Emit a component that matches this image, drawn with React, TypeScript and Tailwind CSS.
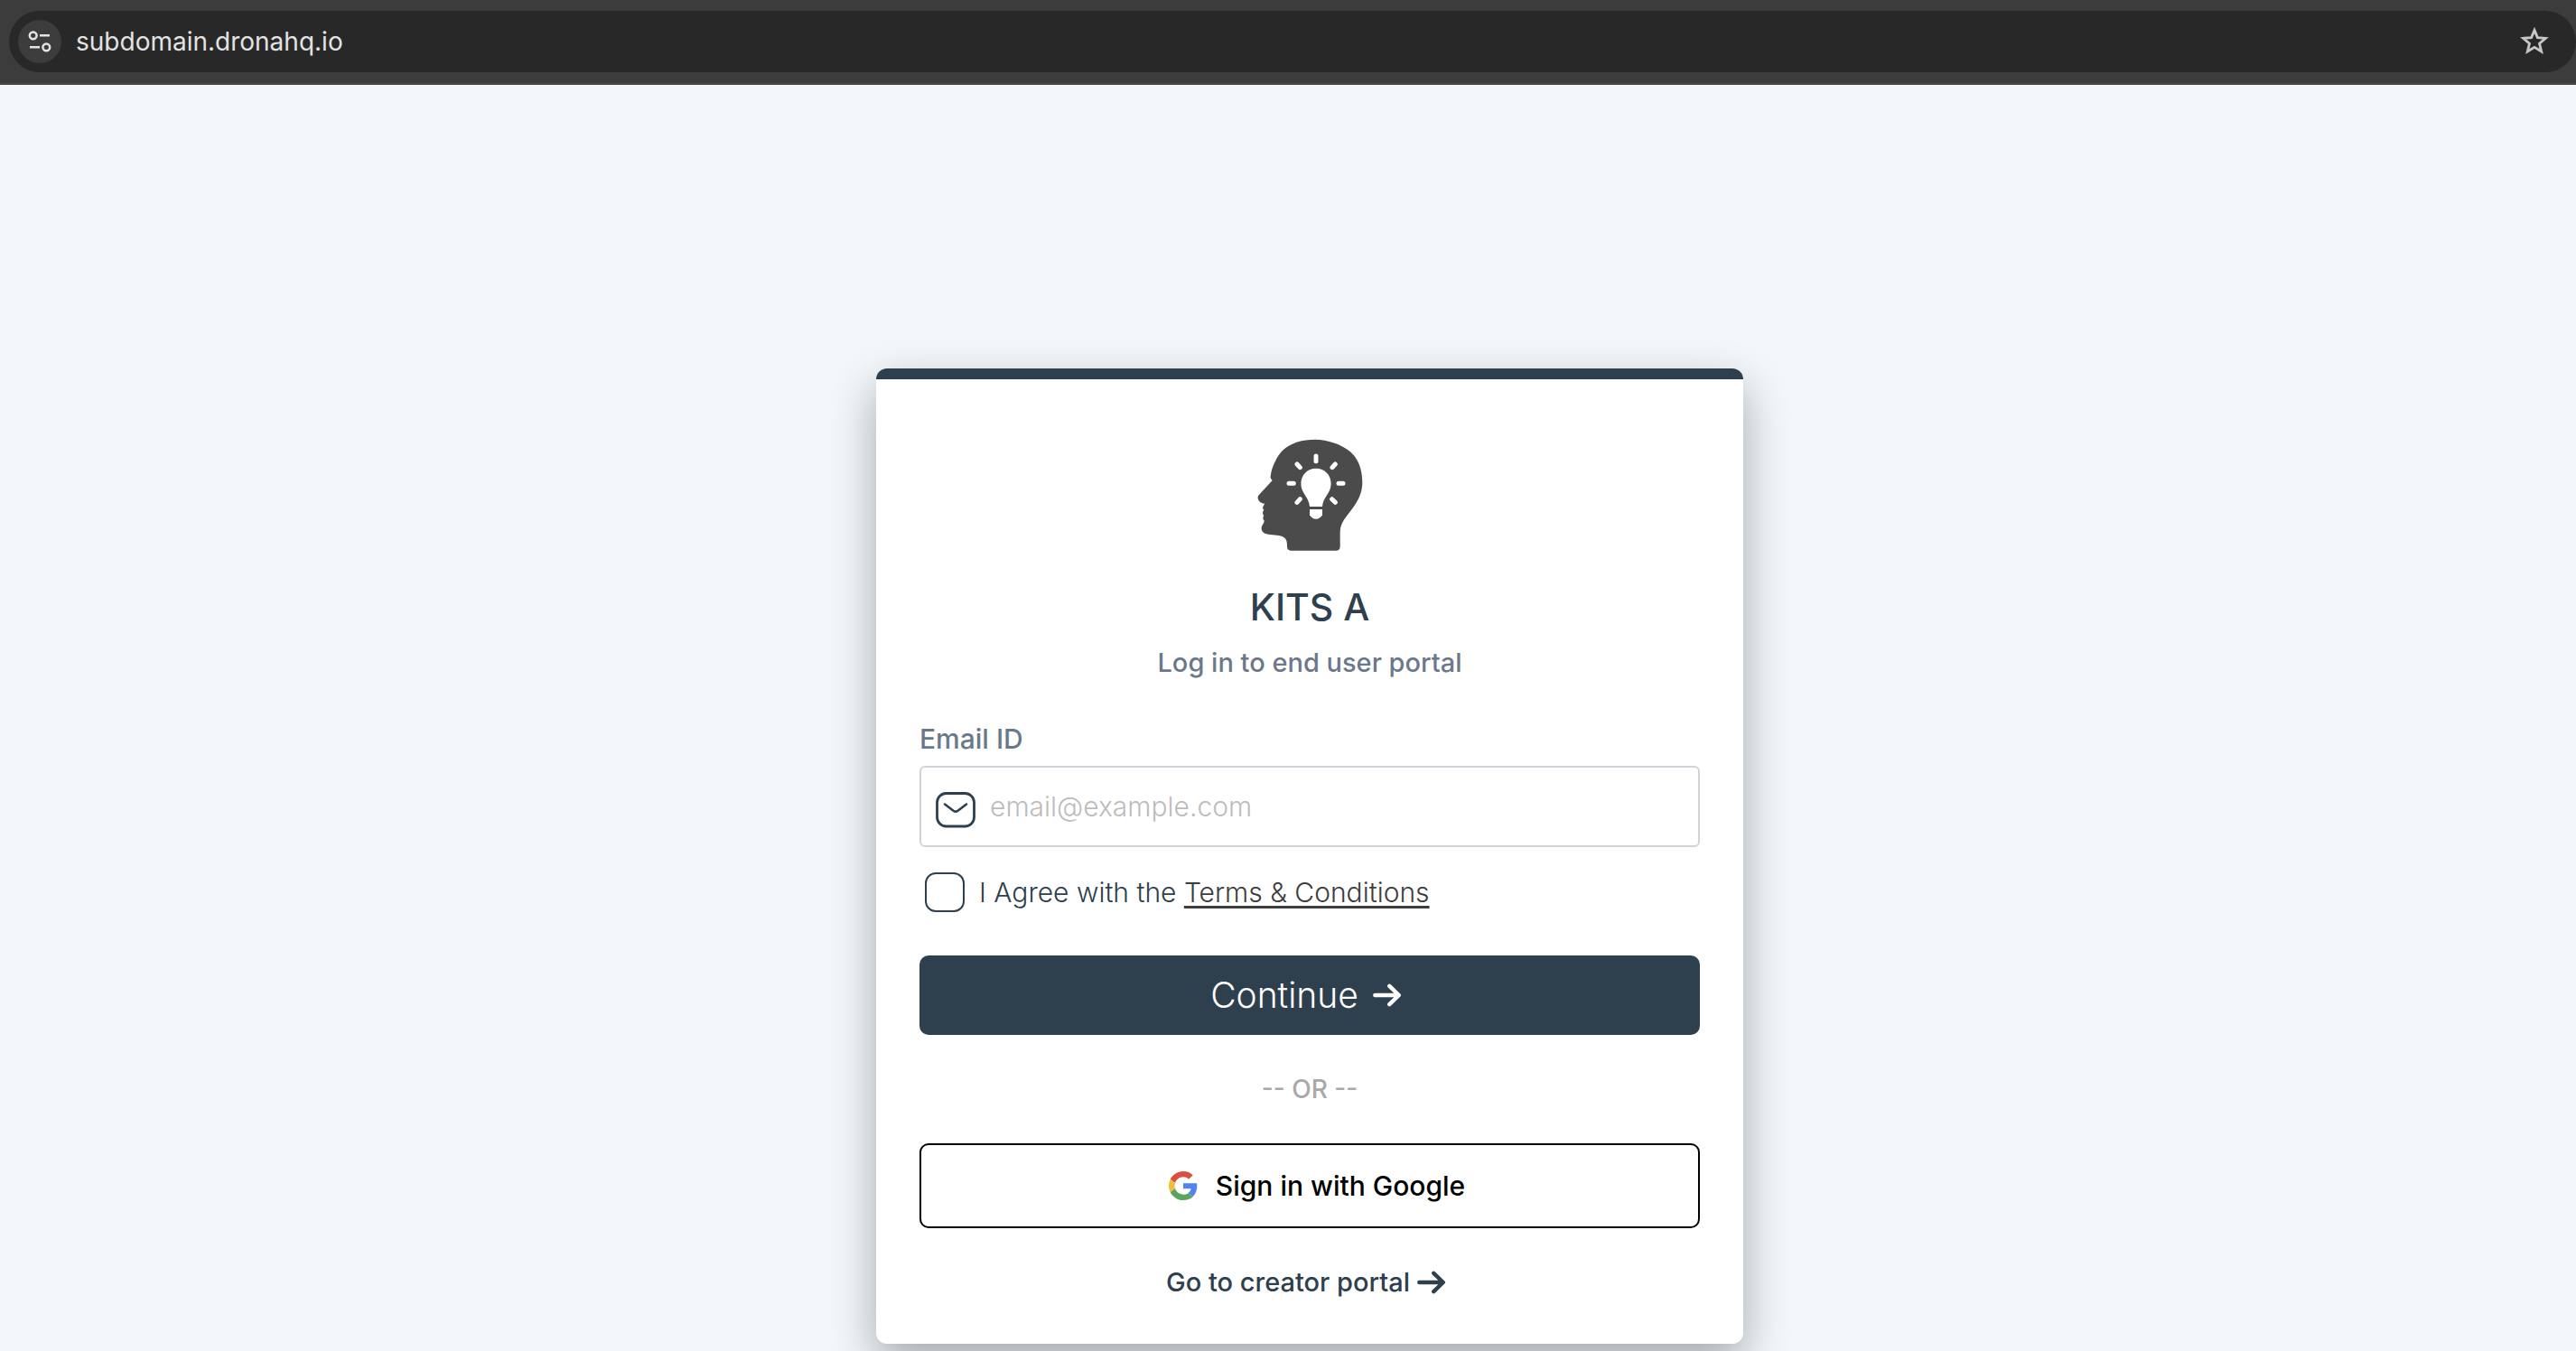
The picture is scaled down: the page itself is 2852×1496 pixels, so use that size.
import React from "react";

function SiteSettingsIcon() {
  return (
    <svg viewBox="0 0 48 48" className="size-12" fill="none" stroke="#e3e3e3" strokeWidth="2.5" aria-hidden="true">
      <circle cx="16.7" cy="17.3" r="3.9" />
      <path d="M24 17.3h11M13 30.3h11" />
      <circle cx="31.3" cy="30.3" r="3.9" />
    </svg>
  );
}

function StarIcon() {
  return (
    <svg viewBox="0 0 32 32" className="size-8" fill="none" stroke="#c7c7c7" strokeWidth="2.8" aria-hidden="true">
      <path d="M16 3.4l3.4 8.2 9 .7-6.9 5.9 2.2 8.8-7.7-4.7-7.7 4.7 2.2-8.8-6.9-5.9 9-.7z" />
    </svg>
  );
}

function IdeaHeadLogo() {
  return (
    <svg viewBox="30 51 420 420" className="size-35" role="img" aria-label="KITS A logo">
      <path
        fill="#4b4b4b"
        d="M110 200C112 175 127 136 152 112C178 88 215 77 258 77C300 78 345 92 375 118C402 142 414 175 415 218C415 255 400 282 382 306C365 330 341 352 341 385L341 432Q341 446 329 446L177 446Q165 446 165 432C165 420 164 412 158 405C148 395 130 395 110 393C90 391 79 385 80 370C81 360 89 356 89 347C88 344 85 342 85 338Q85 333 88 330Q84 327 84 320Q84 315 88 311Q84 308 84 304C84 298 89 296 90 290C82 289 70 284 68 272C67 266 70 262 75 257L116 213C112 208 109 204 110 200Z"
      />
      <path
        fill="#fff"
        d="M261 173C290 173 311 195 311 224C311 255 284 268 282 300L240 300C238 268 211 255 211 224C211 195 232 173 261 173ZM240 309h42v20C276 336 268 341 261 341C254 341 246 336 240 329Z"
      />
      <path
        fill="none"
        stroke="#fff"
        strokeWidth="15"
        strokeLinecap="round"
        d="M261 132V149M198 159L208 170M325 159L315 170M171 223H187M336 223H351M208 275L198 286M314 275L325 286"
      />
    </svg>
  );
}

function MailIcon() {
  return (
    <svg viewBox="0 0 44 40" className="mt-2 h-10 w-11 shrink-0" fill="none" stroke="#2e404e" strokeLinecap="round" strokeLinejoin="round" aria-hidden="true">
      <rect x="1.5" y="1.5" width="41" height="36.5" rx="10" strokeWidth="2.8" />
      <path d="M10 13.5L19.5 20.8Q22 22.6 24.5 20.8L34 13.5" strokeWidth="2.6" />
    </svg>
  );
}

function ArrowIcon() {
  return (
    <svg viewBox="0 0 32 26" className="h-[26px] w-8 shrink-0" fill="none" stroke="currentColor" strokeWidth="4.4" strokeLinecap="round" strokeLinejoin="round" aria-hidden="true">
      <path d="M2.3 13H28M18.3 2.8L28.8 13L18.3 23.2" />
    </svg>
  );
}

function GoogleIcon() {
  return (
    <svg viewBox="0 0 48 48" className="size-8 shrink-0" aria-hidden="true">
      <path fill="#d95040" d="M24 9.5c3.54 0 6.71 1.22 9.21 3.6l6.85-6.85C35.9 2.38 30.47 0 24 0 14.62 0 6.51 5.38 2.56 13.22l7.98 6.19C12.43 13.72 17.74 9.5 24 9.5z" />
      <path fill="#5383ec" d="M46.98 24.55c0-1.57-.15-3.09-.38-4.55H24v9.02h12.94c-.58 2.96-2.26 5.48-4.78 7.18l7.73 6c4.51-4.18 7.09-10.36 7.09-17.65z" />
      <path fill="#f2bd42" d="M10.53 28.59c-.48-1.45-.76-2.99-.76-4.59s.27-3.14.76-4.59l-7.98-6.19C.92 16.46 0 20.12 0 24c0 3.88.92 7.54 2.56 10.78l7.97-6.19z" />
      <path fill="#58a55c" d="M24 48c6.48 0 11.93-2.13 15.89-5.81l-7.73-6c-2.15 1.45-4.92 2.3-8.16 2.3-6.26 0-11.57-4.22-13.47-9.91l-7.98 6.19C6.51 42.62 14.62 48 24 48z" />
    </svg>
  );
}

function AddressBar() {
  return (
    <header className="border-b-2 border-[#484848] bg-[#3c3c3c] pt-3 pb-3 pl-2.5">
      <div className="flex h-17 items-center rounded-full bg-[#282828] pr-[30px] pl-2.5">
        <button type="button" aria-label="View site information" className="rounded-full bg-[#3c3c3c]">
          <SiteSettingsIcon />
        </button>
        <input
          type="text"
          aria-label="Address"
          defaultValue="subdomain.dronahq.io"
          className="ml-4 min-w-0 flex-1 bg-transparent font-[Inter,sans-serif] text-[28px] leading-10 text-[#e3e3e3] outline-none"
        />
        <button type="button" aria-label="Bookmark this page">
          <StarIcon />
        </button>
      </div>
    </header>
  );
}

function LoginCard() {
  return (
    <section className="w-full max-w-[960px] overflow-hidden rounded-xl bg-white shadow-[0_20px_50px_rgba(0,0,0,0.32)]">
      <div className="h-3 bg-[#2e404e]" />
      <form className="flex flex-col px-12 pt-[58px] pb-12" onSubmit={(e) => e.preventDefault()}>
        <div className="flex flex-col items-center">
          <IdeaHeadLogo />
          <h1 className="mt-7 text-[41px] leading-[52px] font-medium">KITS A</h1>
          <p className="mt-4 text-[29px] leading-10 font-medium text-[#6b788c]">Log in to end user portal</p>
        </div>

        <label htmlFor="email" className="mt-11 text-[30px] leading-10 font-medium text-[#6b788c]">
          Email ID
        </label>
        <div className="mt-2.5 flex h-[90px] items-center gap-4 rounded-md border-2 border-[#d2d3da] px-4">
          <MailIcon />
          <input
            id="email"
            type="email"
            placeholder="email@example.com"
            className="min-w-0 flex-1 bg-transparent text-[30px] leading-10 font-light outline-none placeholder:text-[#bcbcbc]"
          />
        </div>

        <div className="mt-7 flex items-center pl-1.5 text-[30px] leading-10 font-light">
          <input id="agree" type="checkbox" className="size-11 appearance-none rounded-xl border-2 border-[#2e404e] checked:bg-[#2e404e]" />
          <label htmlFor="agree" className="ml-4 whitespace-pre">
            I Agree with the{" "}
          </label>
          <a href="#terms" className="text-[#3d3d3d] underline underline-offset-4">
            Terms &amp; Conditions
          </a>
        </div>

        <button type="submit" className="mt-12 flex h-22 items-center justify-center gap-4 rounded-[10px] bg-[#2e404e] pr-2 text-[39px] leading-12 font-light text-white">
          Continue
          <ArrowIcon />
        </button>

        <p className="mt-10 text-center text-[28px] leading-10 font-medium text-[#a9a9a9]">-- OR --</p>

        <button type="button" className="mt-10 flex h-[94px] items-center justify-center gap-5 rounded-[10px] border-2 border-black pl-4 text-[30px] leading-10 font-medium text-black">
          <GoogleIcon />
          Sign in with Google
        </button>

        <a href="#creator" className="mt-10 flex items-center gap-2 self-center pr-2 text-[29px] leading-10 font-medium">
          Go to creator portal
          <ArrowIcon />
        </a>
      </form>
    </section>
  );
}

export default function App() {
  return (
    <div className="flex min-h-screen flex-col bg-[#f3f7fa] font-[Inter,sans-serif] text-[#2e404e]">
      <AddressBar />
      <main className="flex flex-1 flex-col items-center justify-end pt-20 pb-2 pl-12">
        <LoginCard />
      </main>
    </div>
  );
}
